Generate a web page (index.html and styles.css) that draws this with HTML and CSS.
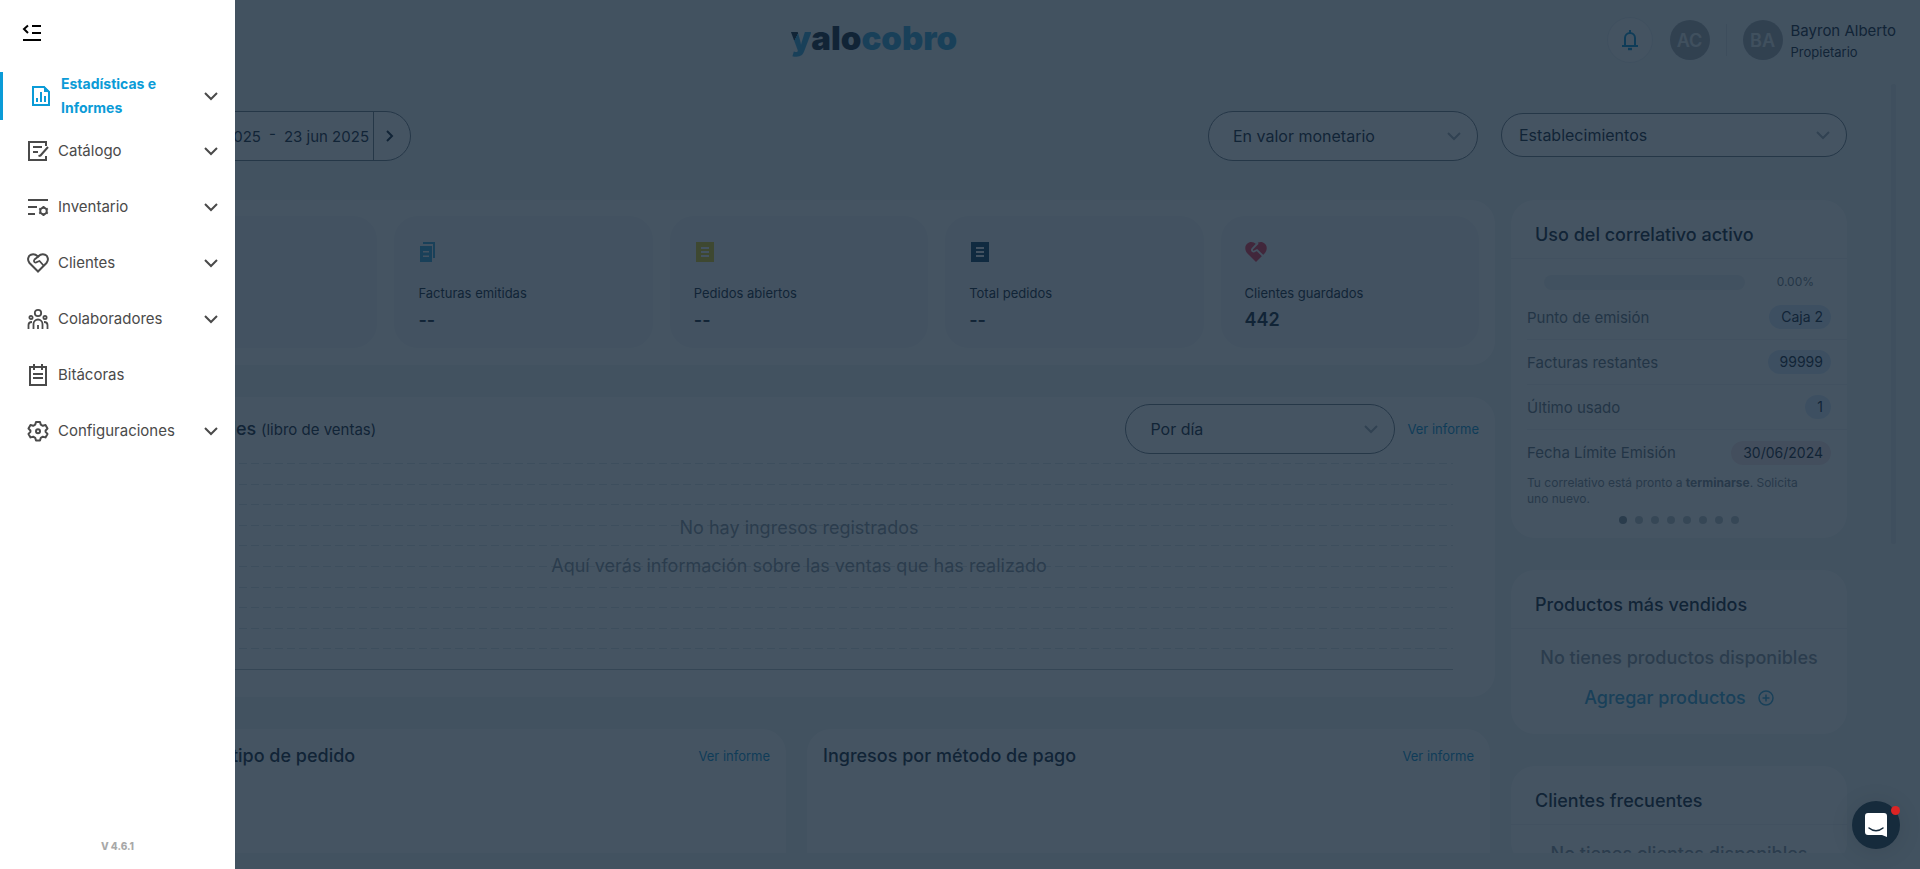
FILE: index.html
```html
<!DOCTYPE html>
<html lang="es">
<head>
<meta charset="utf-8">
<title>yalocobro</title>
<meta name="viewport" content="width=device-width, initial-scale=1">
<link rel="stylesheet" href="styles.css">
</head>
<body>
<div class="app">
  <header class="topbar">
    <a class="logo" href="#" aria-label="yalocobro"><span class="logo-y">y</span><span class="logo-dark">alo</span><span class="logo-blue">cobro</span></a>
    <div class="account">
      <button class="bell" aria-label="Notificaciones">
        <svg width="20" height="22" viewBox="0 0 20 22" fill="none" stroke="currentColor" stroke-width="2"><path d="M2 17h16M5 17V9a5 5 0 0 1 10 0v8M10 4V1"/><path d="M8 20h4" stroke-width="2.4"/></svg>
      </button>
      <span class="avatar">AC</span>
      <span class="bar"></span>
      <span class="avatar">BA</span>
      <div class="who"><span class="who-name">Bayron Alberto</span><span class="who-role">Propietario</span></div>
    </div>
  </header>

  <main class="content">
    <div class="toolbar">
      <div class="dates">
        <button class="step" aria-label="Anterior"><svg width="8" height="12" viewBox="0 0 8 12" fill="none" stroke="currentColor" stroke-width="2"><path d="M7 1L2 6l5 5"/></svg></button>
        <button class="range"><span>23 may 2025</span><span class="dash">-</span><span>23 jun 2025</span></button>
        <button class="step step-next" aria-label="Siguiente"><svg width="8" height="12" viewBox="0 0 8 12" fill="none" stroke="currentColor" stroke-width="2"><path d="M1 1l5 5-5 5"/></svg></button>
      </div>
      <div class="filters">
        <label class="pick pick-tall"><select aria-label="Tipo de valor"><option>En valor monetario</option></select><svg width="14" height="10" viewBox="0 0 14 10" fill="none" stroke="currentColor" stroke-width="2"><path d="M1 2l6 6 6-6"/></svg></label>
        <label class="pick pick-wide"><select aria-label="Establecimientos"><option>Establecimientos</option></select><svg width="14" height="10" viewBox="0 0 14 10" fill="none" stroke="currentColor" stroke-width="2"><path d="M1 2l6 6 6-6"/></svg></label>
      </div>
    </div>

    <div class="columns">
      <div class="col-main">
        <section class="panel kpis">
          <article class="kpi"><svg class="kpi-icon blue" width="20" height="20" viewBox="0 0 20 20" fill="currentColor"><path d="M3 0h14v20H3z"/></svg><span class="kpi-label">Ventas totales</span><strong class="kpi-value">--</strong></article>
          <article class="kpi"><svg class="kpi-icon blue" width="20" height="20" viewBox="0 0 20 20" fill="currentColor"><path fill-rule="evenodd" d="M2 4h12v16H2zM5 9v1.500h6V9zM5 13.500V15h6v-1.500z"/><path d="M5 0h12v16h-2V2H5z"/></svg><span class="kpi-label">Facturas emitidas</span><strong class="kpi-value">--</strong></article>
          <article class="kpi"><svg class="kpi-icon yellow" width="20" height="20" viewBox="0 0 20 20" fill="currentColor"><path fill-rule="evenodd" d="M2 0h18v20H2zM7 5v2h8V5zM7 9v2h8V9zM7 13v2h8v-2z"/></svg><span class="kpi-label">Pedidos abiertos</span><strong class="kpi-value">--</strong></article>
          <article class="kpi"><svg class="kpi-icon navy" width="20" height="20" viewBox="0 0 20 20" fill="currentColor"><path fill-rule="evenodd" d="M2 0h18v20H2zM7 5v2h8V5zM7 9v2h8V9zM7 13v2h8v-2z"/></svg><span class="kpi-label">Total pedidos</span><strong class="kpi-value">--</strong></article>
          <article class="kpi"><svg class="kpi-icon red" width="22" height="20" viewBox="0 0 22 20"><path fill="currentColor" d="M11 20L2 11C-1 7 0 2 4 .5 7-.5 9 .5 11 2c2-1.500 4-2.500 7-1.500 4 1.500 5 6.500 2 10.500z"/><path class="kpi-gap" fill="none" stroke-width="1.800" d="M13 1L7.500 6.500c-1.500 2 .5 4 2.500 2.500l2-1 6 6"/></svg><span class="kpi-label">Clientes guardados</span><strong class="kpi-value">442</strong></article>
        </section>

        <section class="panel chart">
          <div class="chart-head">
            <h2 class="title chart-title">Ingresos totales <small>(libro de ventas)</small></h2>
            <label class="pick pick-tall"><select aria-label="Periodo"><option>Por día</option></select><svg width="14" height="10" viewBox="0 0 14 10" fill="none" stroke="currentColor" stroke-width="2"><path d="M1 2l6 6 6-6"/></svg></label>
            <a class="more" href="#">Ver informe</a>
          </div>
          <div class="plot">
            <div class="grid-lines"><i></i><i></i><i></i><i></i><i></i><i></i><i></i><i></i><i></i><i></i></div>
            <div class="empty"><p>No hay ingresos registrados</p><p>Aquí verás información sobre las ventas que has realizado</p></div>
          </div>
        </section>

        <div class="halves">
          <section class="panel half"><h2 class="title">Ingresos por tipo de pedido</h2><a class="more" href="#">Ver informe</a></section>
          <section class="panel half"><h2 class="title">Ingresos por método de pago</h2><a class="more" href="#">Ver informe</a></section>
        </div>
      </div>

      <aside class="col-side">
        <section class="panel">
          <h2 class="title side-title">Uso del correlativo activo</h2>
          <div class="usage"><div class="track"></div><span>0.00%</span></div>
          <dl class="facts">
            <div><dt>Punto de emisión</dt><dd>Caja 2</dd></div>
            <div><dt>Facturas restantes</dt><dd>99999</dd></div>
            <div><dt>Último usado</dt><dd>1</dd></div>
            <div><dt>Fecha Límite Emisión</dt><dd class="late">30/06/2024</dd></div>
          </dl>
          <p class="note">Tu correlativo está pronto a <b>terminarse</b>. Solicita uno nuevo.</p>
          <div class="dots"><i class="on"></i><i></i><i></i><i></i><i></i><i></i><i></i><i></i></div>
        </section>
        <section class="panel">
          <h2 class="title side-title">Productos más vendidos</h2>
          <p class="none">No tienes productos disponibles</p>
          <a class="add" href="#">Agregar productos <svg width="16" height="16" viewBox="0 0 16 16" fill="none" stroke="currentColor" stroke-width="1.500"><circle cx="8" cy="8" r="7"/><path d="M8 4.500v7M4.500 8h7"/></svg></a>
        </section>
        <section class="panel">
          <h2 class="title side-title">Clientes frecuentes</h2>
          <p class="none">No tienes clientes disponibles</p>
        </section>
      </aside>
    </div>
    <div class="scroll-thumb"></div>
  </main>
</div>

<div class="overlay"></div>

<nav class="drawer">
  <button class="collapse" aria-label="Contraer menú"><svg width="20" height="18" viewBox="0 0 20 18" fill="none" stroke="currentColor" stroke-width="2"><path d="M6 1.500L2 5l4 4M10 2h9M10 9h9M1 16h18"/></svg></button>
  <a class="item active" href="#">
    <svg class="icon" width="20" height="22" viewBox="0 0 20 22" fill="none" stroke="currentColor" stroke-width="2"><path d="M2 2h11l5 5v13H2zM6 17v-4M10 17V7M14 17v-6"/><path d="M13 1v6h6z" fill="currentColor" stroke="none"/></svg>
    <span>Estadísticas e Informes</span><svg class="caret" width="14" height="9" viewBox="0 0 14 9" fill="none" stroke="currentColor" stroke-width="2"><path d="M1 1l6 6 6-6"/></svg></a>
  <a class="item" href="#">
    <svg class="icon" width="22" height="22" viewBox="0 0 22 22" fill="none" stroke="currentColor" stroke-width="2"><path d="M19 6V2H2v18h17v-4M6 7h9M6 12h5"/><path d="M21 7l-7.500 8.500-2 .5"/></svg>
    <span>Catálogo</span><svg class="caret" width="14" height="9" viewBox="0 0 14 9" fill="none" stroke="currentColor" stroke-width="2"><path d="M1 1l6 6 6-6"/></svg></a>
  <a class="item" href="#">
    <svg class="icon" width="22" height="22" viewBox="0 0 22 22" fill="none" stroke="currentColor" stroke-width="2"><path d="M1 4h20M1 11h9M1 18h7"/><circle cx="16.500" cy="15" r="3.300"/><path d="M16.500 10v2M16.500 18v2M12.200 12.500l1.700 1M19 16.500l1.800 1M12.200 17.500l1.700-1M19 13.500l1.800-1"/></svg>
    <span>Inventario</span><svg class="caret" width="14" height="9" viewBox="0 0 14 9" fill="none" stroke="currentColor" stroke-width="2"><path d="M1 1l6 6 6-6"/></svg></a>
  <a class="item" href="#">
    <svg class="icon" width="22" height="20" viewBox="0 0 22 20" fill="none" stroke="currentColor" stroke-width="2"><path d="M11 18.500L2.500 10C0 7 1 3 4 1.700c2.500-1 5 0 7 1.800 2-1.800 4.500-2.800 7-1.800 3 1.300 4 5.300 1.500 8.300z"/><path d="M12 3L7.500 6.500c-1.500 2 .5 4 2.500 2.500l2.500-1 4.500 5" stroke-width="1.800"/></svg>
    <span>Clientes</span><svg class="caret" width="14" height="9" viewBox="0 0 14 9" fill="none" stroke="currentColor" stroke-width="2"><path d="M1 1l6 6 6-6"/></svg></a>
  <a class="item" href="#">
    <svg class="icon" width="22" height="22" viewBox="0 0 22 22" fill="none" stroke="currentColor" stroke-width="1.800"><circle cx="11" cy="5" r="3.200"/><circle cx="4" cy="9.500" r="1.600"/><circle cx="18" cy="9.500" r="1.600"/><path d="M6.500 21v-5a4.500 4.500 0 0 1 9 0v5M11 21v-4M1.500 21v-4c0-2 1-3 3.500-3M20.500 21v-4c0-2-1-3-3.500-3"/></svg>
    <span>Colaboradores</span><svg class="caret" width="14" height="9" viewBox="0 0 14 9" fill="none" stroke="currentColor" stroke-width="2"><path d="M1 1l6 6 6-6"/></svg></a>
  <a class="item" href="#">
    <svg class="icon" width="20" height="22" viewBox="0 0 20 22" fill="none" stroke="currentColor" stroke-width="2"><path d="M2 3h16v18H2zM6 0v6M14 0v6M5 10h10M5 14h10"/></svg>
    <span>Bitácoras</span></a>
  <a class="item" href="#">
    <svg class="icon" width="22" height="22" viewBox="0 0 22 22" fill="none" stroke="currentColor" stroke-width="2" stroke-linejoin="round"><path d="M9 2h4l.8 2.600 2 1.200 2.700-.8 2 3.500-1.900 2v1.400l1.900 2-2 3.500-2.700-.7-2 1.100L13 20.500H9l-.8-2.700-2-1.100-2.700.7-2-3.500 1.900-2v-1.400l-1.900-2 2-3.500 2.700.8 2-1.200z"/><circle cx="11" cy="11.200" r="2"/></svg>
    <span>Configuraciones</span><svg class="caret" width="14" height="9" viewBox="0 0 14 9" fill="none" stroke="currentColor" stroke-width="2"><path d="M1 1l6 6 6-6"/></svg></a>
  <span class="version">V 4.6.1</span>
</nav>

<button class="chat" aria-label="Abrir chat">
  <svg width="22" height="24" viewBox="0 0 22 24"><path fill="#fff" d="M3 0h16a3 3 0 0 1 3 3v21l-5-2H3a3 3 0 0 1-3-3V3a3 3 0 0 1 3-3z"/><path d="M4 15c4 3.500 10 3.500 14 0" fill="none" stroke="#162b3c" stroke-width="1.500" stroke-linecap="round"/></svg>
  <span class="chat-dot"></span>
</button>
</body>
</html>
```
FILE: styles.css
```css
* { box-sizing: border-box; }
body { margin: 0; font-family: Inter, "Liberation Sans", sans-serif; font-size: 14px; color: #142539; background: #f0f3f5; }
h2, p, dl, dd { margin: 0; }
a { text-decoration: none; color: inherit; }
button, select { font: inherit; color: inherit; background: none; border: 0; padding: 0; }

.app { height: 100vh; display: flex; flex-direction: column; overflow: hidden; padding-bottom: 16px; }

.topbar { flex: none; height: 80px; display: grid; grid-template-columns: 1fr auto 1fr; align-items: center; padding: 0 24px; }
.logo { grid-column: 2; margin-right: 172px; padding-bottom: 4px; font-size: 33px; line-height: 40px; font-weight: 900; }
.logo-y { background: linear-gradient(115deg, #142539 36%, #3aa4d6 36%); -webkit-background-clip: text; background-clip: text; color: transparent; }
.logo-blue { color: #3aa4d6; }
.account { justify-self: end; display: flex; align-items: center; }
.bell { width: 46px; height: 46px; border: 1px solid #e3e9ee; border-radius: 50%; background: #f9fafb; color: #0b93d2; display: grid; place-items: center; margin-right: 17px; }
.avatar { width: 40px; height: 40px; border-radius: 50%; background: #a3a8ae; color: #e9ecee; display: grid; place-items: center; font-size: 18px; font-weight: 600; }
.bar { width: 1px; height: 32px; background: #d8dde1; margin: 0 16px; }
.who { display: flex; flex-direction: column; margin-left: 8px; padding-top: 2px; }
.who-name { font-size: 15px; line-height: 22px; }
.who-role { font-size: 13px; line-height: 20px; }

.content { flex: 1; min-height: 0; overflow: hidden; padding: 31px 73px 0 103px; position: relative; }
.toolbar { display: flex; justify-content: space-between; margin-bottom: 39px; }
.dates { display: flex; width: 308px; height: 50px; border: 1px solid #6e7a86; border-radius: 25px; overflow: hidden; background: #fff; }
.step { flex: 0 0 37px; display: grid; place-items: center; }
.step-next { border-left: 1px solid #6e7a86; padding-right: 4px; }
.range { flex: 1; display: flex; justify-content: flex-end; gap: 8px; padding-right: 4px; align-items: center; white-space: nowrap; font-size: 15px; min-width: 0; }
.dash { margin-top: -6px; }
.filters { display: flex; gap: 23px; align-items: center; }
.pick { display: flex; align-items: center; border: 1px solid #6e7a86; border-radius: 25px; background: #fff; padding-right: 16px; color: #a3acb5; }
.pick select { appearance: none; flex: 1; align-self: stretch; color: #142539; font-size: 16px; }
.pick-tall { width: 270px; height: 50px; padding-left: 24px; }
.pick-wide { width: 346px; height: 44px; padding-left: 17px; margin-bottom: 2px; }

.columns { display: grid; grid-template-columns: minmax(0, 1fr) 336px; gap: 16px; }
.col-main, .col-side { display: flex; flex-direction: column; gap: 32px; }
.panel { background: #fff; border-radius: 24px; }
.title { font-size: 18px; line-height: 24px; font-weight: 500; }

.kpis { display: grid; grid-template-columns: repeat(5, 1fr); gap: 17px; padding: 16px 16px 17px; }
.kpi { background: #f3f6f8; border-radius: 24px; padding: 26px 24px 16px; display: flex; flex-direction: column; align-items: flex-start; }
.kpi-icon { display: block; }
.kpi-label { font-size: 13px; line-height: 18px; margin-top: 22px; }
.kpi-value { font-size: 18px; line-height: 24px; margin-top: 6px; font-weight: 600; }
.blue { color: #3aa4d6; }
.yellow { color: #e0c820; }
.navy { color: #0f4264; }
.red { color: #ee3350; }
.kpi-gap { stroke: #f3f6f8; }

.chart { height: 300px; padding: 7px 16px 27px; display: flex; flex-direction: column; }
.chart-head { display: flex; align-items: center; }
.chart-title { flex: 1; font-weight: 500; }
.chart-title small { font-size: 15px; font-weight: 400; }
.more { color: #0b93d2; font-size: 13px; line-height: 18px; margin-left: 12px; }
.plot { flex: 1; display: grid; margin-top: 9px; }
.grid-lines, .empty { grid-area: 1 / 1; }
.grid-lines { display: grid; margin-right: 26px; border-bottom: 1px solid #b4bdc5; }
.grid-lines i { background: repeating-linear-gradient(90deg, #dce2e6 0 8px, transparent 8px 12px) top / 100% 1px no-repeat; }
.empty { display: flex; flex-direction: column; align-items: center; gap: 14px; padding-top: 53px; font-size: 18px; line-height: 24px; color: #8a949e; }

.halves { display: grid; grid-template-columns: 1fr 1fr; gap: 21px; margin-right: 5px; }
.half { height: 300px; padding: 15px 16px; display: flex; justify-content: space-between; align-items: flex-start; }
.half .more { margin-top: 3px; }

.side-title { padding: 23px 24px 11px; border-bottom: 1px solid #eff2f4; }
.usage { display: flex; align-items: center; padding: 14px 33px 4px; gap: 32px; font-size: 12px; line-height: 18px; color: #6d7985; }
.track { flex: 1; height: 15px; border-radius: 8px; background: #edf0f3; }
.facts { padding-left: 16px; color: #66727f; }
.facts div { display: flex; justify-content: space-between; align-items: center; height: 45px; padding-right: 16px; border-bottom: 1px solid #eff2f4; }
.facts div:last-child { border-bottom: 0; }
.facts dt { font-size: 15px; }
.facts dd { padding: 0 8px 0 12px; line-height: 24px; border-radius: 12px; background: #dbe9fb; color: #142539; }
.facts dd.late { background: #f7e4e8; }
.note { padding: 0 32px 0 16px; font-size: 12px; line-height: 16px; color: #7b8691; }
.dots { display: flex; justify-content: center; gap: 8px; padding: 9px 0 14px; }
.dots i { width: 8px; height: 8px; border-radius: 50%; background: #bcc3ca; }
.dots .on { background: #84909b; }
.none { text-align: center; padding-top: 17px; font-size: 18px; line-height: 24px; font-weight: 500; color: #8a949e; }
.add { display: flex; justify-content: center; align-items: center; gap: 12px; padding: 16px 0 24px; font-size: 18px; line-height: 24px; font-weight: 500; color: #3aa4d6; }
.scroll-thumb { position: absolute; right: 24px; top: 4px; width: 5px; height: 460px; border-radius: 3px; background: #e2e6ea; }

.overlay { position: fixed; inset: 0; background: rgba(17, 36, 54, 0.78); }

.drawer { position: fixed; inset: 0 auto 0 0; width: 235px; background: #fff; color: #4a4a4a; display: flex; flex-direction: column; padding-bottom: 16px; }
.collapse { align-self: flex-start; margin: 23px 0 30px 22px; height: 19px; color: #000; }
.collapse svg { display: block; }
.item { display: flex; align-items: center; height: 56px; padding: 0 17px 0 27px; font-size: 15px; line-height: 24px; }
.icon { flex: 0 0 22px; }
.item span { flex: 1; margin-left: 9px; }
.active { height: 48px; border-left: 3px solid #0b9bd7; font-size: 14px; font-weight: 700; color: #0b9bd7; margin-bottom: 3px; }
.active span { padding-right: 24px; }
.active .caret { color: #4a4a4a; }
.version { margin-top: auto; align-self: center; font-size: 10px; line-height: 14px; font-weight: 800; color: #a8a8a8; }

.chat { position: fixed; right: 20px; bottom: 20px; width: 48px; height: 48px; border-radius: 50%; background: #162b3c; display: grid; place-items: center; box-shadow: 0 2px 24px rgba(0, 0, 0, 0.1); }
.chat-dot { position: absolute; top: 5px; right: 0; width: 9px; height: 9px; border-radius: 50%; background: #dc2424; }
```
